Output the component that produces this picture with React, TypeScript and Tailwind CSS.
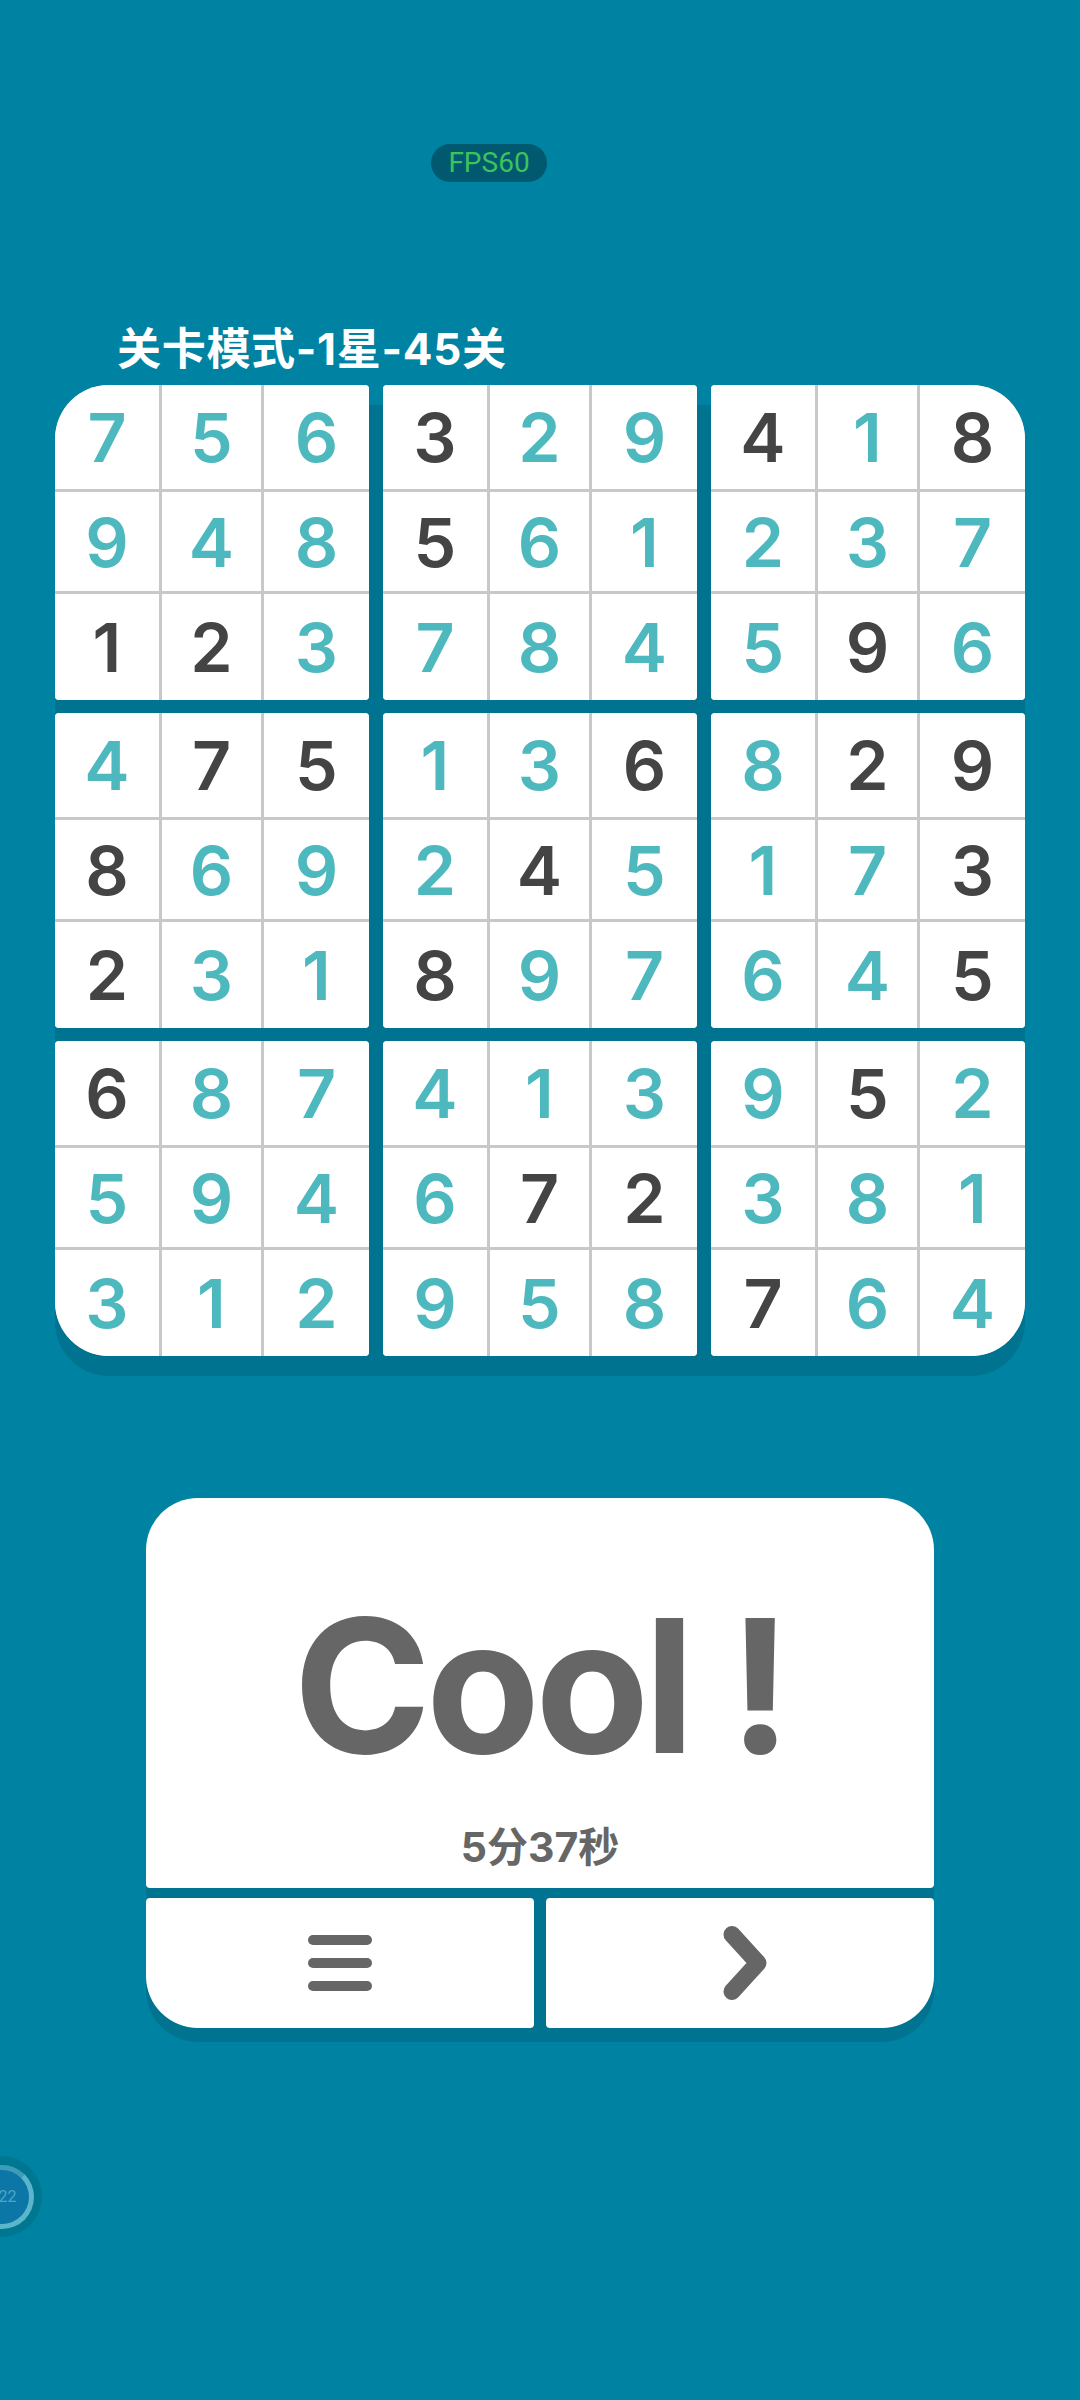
import React from 'react';

// each box: digits row by row, and a mask where 1 = given (dark) digit
const boxes = [
  { digits: '756948123', mask: '000000110', corner: 'rounded-tl-[54px]' },
  { digits: '329561784', mask: '100100000', corner: '' },
  { digits: '418237596', mask: '101000010', corner: 'rounded-tr-[54px]' },
  { digits: '475869231', mask: '011100100', corner: '' },
  { digits: '136245897', mask: '001010100', corner: '' },
  { digits: '829173645', mask: '011001001', corner: '' },
  { digits: '687594312', mask: '100000000', corner: 'rounded-bl-[54px]' },
  { digits: '413672958', mask: '000011000', corner: '' },
  { digits: '952381764', mask: '010000100', corner: 'rounded-br-[54px]' },
];

const App: React.FC = () => {
  return (
    <div className="relative w-[1080px] h-[2400px] overflow-hidden bg-[#0083a2] flex flex-col font-['Inter','Noto_Sans_CJK_SC',sans-serif]">
      {/* FPS pill */}
      <div className="mt-[144px] ml-[431px] w-[116px] h-[38px] rounded-full bg-[#00596f] flex items-center justify-center font-['Roboto',sans-serif] text-[28px] leading-none text-[#3cc35c]">
        FPS60
      </div>

      {/* title */}
      <div className="mt-[142px] ml-[117px] h-[50px] text-[44px] leading-[50px] font-bold tracking-[0.7px] text-white whitespace-nowrap">
        关卡模式-1星-45关
      </div>

      {/* board */}
      <div className="mt-[11px] ml-[55px] w-[970px] h-[971px] rounded-[54px] bg-[linear-gradient(transparent_20px,#007390_20px)] shadow-[0_20px_0_#007390] grid grid-cols-[314px_314px_314px] grid-rows-[315px_315px_315px] gap-x-[14px] gap-y-[13px]">
        {boxes.map((box, b) => (
          <div
            key={b}
            className={`rounded-[4px] ${box.corner} overflow-hidden bg-[#c8c8c8] grid grid-cols-[104px_99px_105px] grid-rows-[104px_99px_106px] gap-[3px]`}
          >
            {box.digits.split('').map((d, i) => (
              <div
                key={i}
                className={`bg-white flex items-center justify-center text-[68px] leading-none font-semibold ${box.mask[i] === '1' ? 'text-[#444444]' : 'text-[#4db9be]'}`}
              >
                {d}
              </div>
            ))}
          </div>
        ))}
      </div>

      {/* result card */}
      <div className="mt-[142px] ml-[146px] w-[788px] rounded-[52px] bg-[linear-gradient(transparent_20px,#007390_20px)] shadow-[0_14px_0_#007390] flex flex-col gap-[10px]">
        <div className="h-[390px] rounded-t-[52px] rounded-b-[4px] bg-white flex flex-col items-center">
          <div className="mt-[93px] h-[190px] text-[186px] leading-[190px] font-bold tracking-[-5px] text-[#666666] whitespace-nowrap">
            Cool !
          </div>
          <div className="mt-[44px] h-[44px] text-[41px] leading-[44px] font-bold text-[#666666]">
            5分37秒
          </div>
        </div>
        <div className="flex gap-[12px]">
          <div className="w-[388px] h-[130px] rounded-tl-[4px] rounded-tr-[4px] rounded-br-[4px] rounded-bl-[52px] bg-white flex flex-col items-center justify-center gap-[13px]">
            <div className="w-[64px] h-[10px] rounded-full bg-[#666666]" />
            <div className="w-[64px] h-[10px] rounded-full bg-[#666666]" />
            <div className="w-[64px] h-[10px] rounded-full bg-[#666666]" />
          </div>
          <div className="w-[388px] h-[130px] rounded-tl-[4px] rounded-tr-[4px] rounded-bl-[4px] rounded-br-[52px] bg-white flex items-center justify-center">
            <svg className="ml-[9px]" width="46" height="74" viewBox="0 0 46 74" fill="none">
              <path d="M10 8.5 L36 37 L10 65.5" stroke="#666666" strokeWidth="17" strokeLinecap="round" strokeLinejoin="round" />
            </svg>
          </div>
        </div>
      </div>

      {/* floating timer bubble, clipped by the left edge */}
      <div className="absolute left-[-39px] top-[2156px] w-[81px] h-[81px] rounded-full bg-[#007791] flex items-center justify-center">
        <div className="w-[64px] h-[64px] rounded-full border-[5px] border-[#5db5cc] border-t-[#3f9cb8] bg-[#0c76a7] flex items-center justify-center">
          <span className="pl-[12px] text-[16px] leading-none text-[#4fa5c4] font-['Roboto',sans-serif]">22</span>
        </div>
      </div>
    </div>
  );
};

export default App;
